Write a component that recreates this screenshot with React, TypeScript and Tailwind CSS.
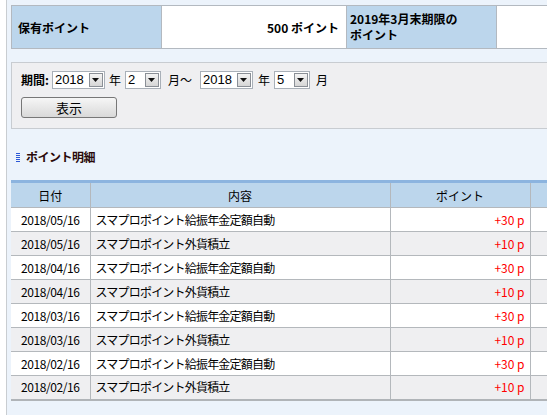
const ROWS = [
  { date: '2018/05/16', desc: 'スマプロポイント給振年金定額自動', pt: '+30 p' },
  { date: '2018/05/16', desc: 'スマプロポイント外貨積立', pt: '+10 p' },
  { date: '2018/04/16', desc: 'スマプロポイント給振年金定額自動', pt: '+30 p' },
  { date: '2018/04/16', desc: 'スマプロポイント外貨積立', pt: '+10 p' },
  { date: '2018/03/16', desc: 'スマプロポイント給振年金定額自動', pt: '+30 p' },
  { date: '2018/03/16', desc: 'スマプロポイント外貨積立', pt: '+10 p' },
  { date: '2018/02/16', desc: 'スマプロポイント給振年金定額自動', pt: '+30 p' },
  { date: '2018/02/16', desc: 'スマプロポイント外貨積立', pt: '+10 p' },
]

function FakeSelect({ value, className }: { value: string; className: string }) {
  return (
    <div className={`flex h-[18px] items-stretch border border-[#a9b0b8] bg-white ${className}`}>
      <span className="flex-1 pl-[2px] font-['Liberation_Sans',Arial,sans-serif] text-[13px] leading-[16px] text-black">
        {value}
      </span>
      <span className="m-[1px] flex w-[14px] items-center justify-center border border-[#8a8f96] bg-gradient-to-b from-[#f4f4f4] to-[#d6d6d6]">
        <svg width="7" height="4" viewBox="0 0 7 4">
          <path d="M0 0h7L3.5 4z" fill="#111" />
        </svg>
      </span>
    </div>
  )
}

export default function App() {
  return (
    <div className="h-[415px] w-[547px] overflow-hidden bg-white font-['Noto_Sans_CJK_JP',sans-serif] text-[12px] text-black">
      <div className="ml-[6px] h-full w-[620px] border-l border-[#c9cdd1] bg-[#ecf3fb] pl-[4px] pt-[5px]">
        {/* Summary */}
        <div className="grid h-[44px] w-[580px] grid-cols-[149px_185px_150px_1fr] border border-[#b3b9c0] font-bold">
          <div className="flex items-center bg-[#bcd6ec] pl-[6px] pt-[2px]">保有ポイント</div>
          <div className="flex items-center justify-end border-l border-[#b3b9c0] bg-white pr-[7px] pt-[2px]">
            500 ポイント
          </div>
          <div className="flex items-center border-l border-[#b3b9c0] bg-[#bcd6ec] pl-[3px] leading-[16px]">
            2019年3月末期限の
            <br />
            ポイント
          </div>
          <div className="border-l border-[#b3b9c0] bg-white" />
        </div>

        {/* Filter */}
        <div className="mt-[13px] h-[67px] w-[580px] border border-[#c8ccd1] bg-[#efeff1] pl-[9px] pt-[8px]">
          <div className="flex items-center">
            <span className="mr-[3px] font-bold">期間:</span>
            <FakeSelect value="2018" className="w-[53px]" />
            <span className="ml-[4px] mr-[4px]">年</span>
            <FakeSelect value="2" className="w-[36px]" />
            <span className="ml-[7px] mr-[8px]">月～</span>
            <FakeSelect value="2018" className="w-[53px]" />
            <span className="ml-[5px] mr-[4px]">年</span>
            <FakeSelect value="5" className="w-[36px]" />
            <span className="ml-[6px]">月</span>
          </div>
          <button className="mt-[8px] flex h-[21px] w-[96px] items-center justify-center rounded-[3px] border border-[#777] bg-gradient-to-b from-[#f6f6f6] to-[#d9d9d9] text-[13px] leading-none">
            表示
          </button>
        </div>

        {/* Heading */}
        <div className="flex h-[51px] items-start pl-[5px] pt-[21px]">
          <svg width="4" height="9" viewBox="0 0 4 9" className="mt-[3px]">
            <rect y="0" width="4" height="1" fill="#2c58d6" />
            <rect y="2" width="4" height="1" fill="#2c58d6" />
            <rect y="4" width="4" height="1" fill="#2c58d6" />
            <rect y="6" width="4" height="1" fill="#2c58d6" />
            <rect y="8" width="4" height="1" fill="#2c58d6" />
          </svg>
          <span className="ml-[6px] text-[12px] font-bold leading-[14px] tracking-[-0.5px] text-[#2a0a0a]">ポイント明細</span>
        </div>

        {/* Detail table */}
        <table className="w-[580px] table-fixed border-collapse">
          <colgroup>
            <col className="w-[79px]" />
            <col className="w-[300px]" />
            <col className="w-[140px]" />
            <col />
          </colgroup>
          <thead>
            <tr className="h-[26px] bg-[#bcd6ec]">
              <th className="border-b border-r border-t-[3px] border-[#b4b8bc] border-t-[#8cb4df] pt-[1px] font-normal">日付</th>
              <th className="border-b border-r border-t-[3px] border-[#b4b8bc] border-t-[#8cb4df] pt-[1px] font-normal">内容</th>
              <th className="border-b border-r border-t-[3px] border-[#b4b8bc] border-t-[#8cb4df] pt-[1px] font-normal">ポイント</th>
              <th className="border-b border-t-[3px] border-[#b4b8bc] border-t-[#8cb4df]" />
            </tr>
          </thead>
          <tbody>
            {ROWS.map((r, i) => (
              <tr key={i} className={`h-[24px] ${i % 2 === 0 ? 'bg-white' : 'bg-[#efeff1]'}`}>
                <td className={`border-r border-[#b4b8bc] text-center tracking-[-0.4px] ${i === ROWS.length - 1 ? 'border-b-[2px] border-b-[#b0b4b8]' : 'border-b'}`}>
                  {r.date}
                </td>
                <td className={`border-r border-[#b4b8bc] pl-[5px] tracking-[-0.8px] ${i === ROWS.length - 1 ? 'border-b-[2px] border-b-[#b0b4b8]' : 'border-b'}`}>
                  {r.desc}
                </td>
                <td className={`border-r border-[#b4b8bc] pr-[5px] text-right text-[#ff0000] ${i === ROWS.length - 1 ? 'border-b-[2px] border-b-[#b0b4b8]' : 'border-b'}`}>
                  {r.pt}
                </td>
                <td className={`border-[#b4b8bc] ${i === ROWS.length - 1 ? 'border-b-[2px] border-b-[#b0b4b8]' : 'border-b'}`} />
              </tr>
            ))}
          </tbody>
        </table>
      </div>
    </div>
  )
}
